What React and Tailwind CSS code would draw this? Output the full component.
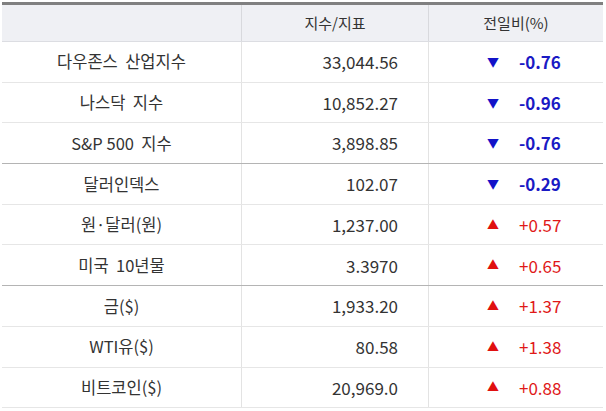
import React from "react";

const rows = [
    { name: "다우존스  산업지수", value: "33,044.56", change: "-0.76" },
    { name: "나스닥  지수", value: "10,852.27", change: "-0.96" },
    { name: "S&P 500  지수", value: "3,898.85", change: "-0.76", divider: true },
    { name: "달러인덱스", value: "102.07", change: "-0.29" },
    { name: "원·달러(원)", value: "1,237.00", change: "+0.57" },
    { name: "미국  10년물", value: "3.3970", change: "+0.65", divider: true },
    { name: "금($)", value: "1,933.20", change: "+1.37" },
    { name: "WTI유($)", value: "80.58", change: "+1.38" },
    { name: "비트코인($)", value: "20,969.0", change: "+0.88" },
];

const App = () => {
    return (
        <div
            className="w-[606px] h-[411px] bg-white text-[#333] pt-[2px] px-[2px] overflow-hidden"
            style={{ fontFamily: '"Noto Sans CJK KR", "Noto Sans", sans-serif' }}
        >
            <div className="w-[601px] border-t-[3px] border-[#808080]">
                <div className="grid grid-cols-[240px_187px_174px] h-[37px] bg-[#eff0f4] text-[15px] border-b border-[#dcdde2]">
                    <div className="border-r border-[#d8d9dd]"></div>
                    <div className="flex items-center justify-center border-r border-[#d8d9dd]">지수/지표</div>
                    <div className="flex items-center justify-center">전일비(%)</div>
                </div>
                {rows.map((row, index) => {
                    const down = row.change.startsWith("-");
                    return (
                        <div
                            key={index}
                            className={`grid grid-cols-[240px_187px_174px] h-[40.7px] border-b ${
                                row.divider ? "border-[#b4b4b4]" : "border-[#e6e6e6]"
                            }`}
                        >
                            <div className="flex items-center justify-center whitespace-pre text-[16.5px] border-r border-[#e3e3e3]">
                                {row.name}
                            </div>
                            <div className="flex items-center justify-end pr-[30px] text-[17px] border-r border-[#e3e3e3]">
                                {row.value}
                            </div>
                            <div className="flex items-center text-[17px]">
                                <span
                                    className={`w-[90px] text-right pr-[20px] text-[12px] ${
                                        down ? "text-[#1212c8]" : "text-[#e01010]"
                                    }`}
                                >
                                    {down ? "▼" : "▲"}
                                </span>
                                <span
                                    className={
                                        down ? "text-[#1a1ac4] font-bold" : "text-[#e01818]"
                                    }
                                >
                                    {row.change}
                                </span>
                            </div>
                        </div>
                    );
                })}
            </div>
        </div>
    );
};

export default App;
